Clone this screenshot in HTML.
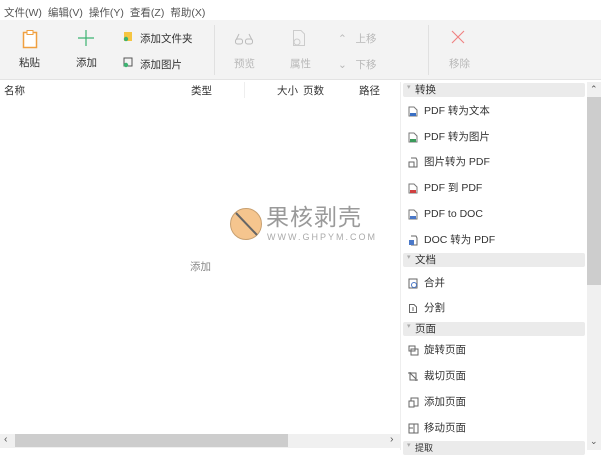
<!DOCTYPE html>
<html><head><meta charset="utf-8"><style>
*{margin:0;padding:0;box-sizing:border-box}
body{width:601px;height:450px;overflow:hidden;background:#fff;font-family:"Liberation Sans","Noto Sans CJK SC",sans-serif;font-size:10.5px;color:#333;position:relative}
.a{position:absolute;white-space:nowrap}
.menu span{margin-right:6px;color:#555}
.gray{color:#b8b8b8}
.hdr{position:absolute;left:403px;width:182px;height:14px;background:#ebebeb;border-radius:2px}
.hdr span{position:absolute;left:12px;top:0;line-height:14px}
.hdr i{position:absolute;left:4px;top:0;font-style:normal;font-size:7px;color:#aaa}
.it{position:absolute;left:408px;line-height:14px}
.it svg{position:absolute;left:0;top:2px}
.it span{position:absolute;left:16px;white-space:nowrap}
</style></head><body>
<div class="a menu" style="left:4px;top:6px;line-height:14px"><span>文件(W)</span><span>编辑(V)</span><span>操作(Y)</span><span>查看(Z)</span><span>帮助(X)</span></div>
<div class="a" style="left:0;top:20px;width:601px;height:60px;background:#f3f3f3;border-bottom:1px solid #e3e3e3"></div>
<div class="a" style="left:214px;top:25px;width:1px;height:50px;background:#e0e0e0"></div>
<div class="a" style="left:428px;top:25px;width:1px;height:50px;background:#e0e0e0"></div>
<svg class="a" style="left:22px;top:29px" width="16" height="20"><rect x="1.5" y="3.5" width="13" height="15" fill="#fff" stroke="#f0a040" stroke-width="1.5"/><rect x="5" y="1.5" width="6" height="4" fill="#fff" stroke="#f0a040"/></svg>
<div class="a" style="left:19px;top:55px">粘贴</div>
<svg class="a" style="left:77px;top:29px" width="18" height="18"><path d="M9 1V17M1 9H17" stroke="#3cb371" stroke-width="1.2"/></svg>
<div class="a" style="left:76px;top:55px">添加</div>
<svg class="a" style="left:123px;top:31px" width="10" height="11"><rect x="1" y="1" width="8" height="9" fill="#f5c542"/><circle cx="3" cy="8" r="2.2" fill="#3cb371"/></svg>
<div class="a" style="left:140px;top:31px">添加文件夹</div>
<svg class="a" style="left:123px;top:57px" width="10" height="11"><rect x="1" y="1" width="8" height="8" fill="none" stroke="#555"/><circle cx="3" cy="8" r="2.2" fill="#3cb371"/></svg>
<div class="a" style="left:140px;top:57px">添加图片</div>
<svg class="a" style="left:234px;top:32px" width="20" height="14"><path d="M2 8L5 2M18 8L15 2" stroke="#bbb"/><rect x="1.5" y="7" width="7" height="5" rx="2" fill="none" stroke="#bbb"/><rect x="11.5" y="7" width="7" height="5" rx="2" fill="none" stroke="#bbb"/></svg>
<div class="a gray" style="left:234px;top:56px">预览</div>
<svg class="a" style="left:292px;top:29px" width="14" height="18"><path d="M1.5 1.5H9L12.5 5V16.5H1.5Z" fill="none" stroke="#ccc"/><circle cx="5" cy="13" r="3" fill="#f3f3f3" stroke="#ccc"/></svg>
<div class="a gray" style="left:290px;top:56px">属性</div>
<div class="a gray" style="left:338px;top:31px">⌃&nbsp;&nbsp;&nbsp;上移</div>
<div class="a gray" style="left:338px;top:57px">⌄&nbsp;&nbsp;&nbsp;下移</div>
<svg class="a" style="left:451px;top:30px" width="14" height="14"><path d="M1 1L13 13M13 1L1 13" stroke="#f08080" stroke-width="1.1"/></svg>
<div class="a gray" style="left:449px;top:56px">移除</div>
<div class="a" style="left:4px;top:83px">名称</div>
<div class="a" style="left:191px;top:83px">类型</div>
<div class="a" style="left:244px;top:82px;width:1px;height:16px;background:#eee"></div>
<div class="a" style="left:277px;top:83px">大小</div>
<div class="a" style="left:303px;top:83px">页数</div>
<div class="a" style="left:359px;top:83px">路径</div>
<div class="a" style="left:190px;top:259px;color:#888">添加</div>
<svg class="a" style="left:229px;top:207px" width="34" height="34"><circle cx="17" cy="17" r="15.5" fill="#f5c58e" stroke="#c8a070"/><path d="M7 6L28 28" stroke="#666" stroke-width="2"/></svg>
<div class="a" style="left:266px;top:204px;font-size:23px;color:#9a9a9a;letter-spacing:1px;line-height:26px">果核剥壳</div>
<div class="a" style="left:267px;top:232px;font-size:9px;color:#aaa;letter-spacing:2px">WWW.GHPYM.COM</div>
<div class="a" style="left:0;top:434px;width:400px;height:14px;background:#f0f0f0"></div>
<div class="a" style="left:15px;top:434px;width:273px;height:13px;background:#cdcdcd"></div>
<div class="a" style="left:4px;top:433px;color:#555">‹</div>
<div class="a" style="left:390px;top:433px;color:#555">›</div>
<div class="a" style="left:400px;top:82px;width:1px;height:368px;background:#eee"></div>
<div class="hdr" style="top:83px"><i>▾</i><span>转换</span></div>
<div class="hdr" style="top:253px"><i>▾</i><span>文档</span></div>
<div class="hdr" style="top:322px"><i>▾</i><span>页面</span></div>
<div class="hdr" style="top:441px"><i>▾</i><span style="font-size:9px">提取</span></div>
<div class="it" style="top:104px"><svg width="10" height="11"><path d="M1 1H6L9 4V10H1Z" fill="none" stroke="#777"/><rect x="2" y="7" width="6" height="3" fill="#3a6fc4"/></svg><span>PDF 转为文本</span></div>
<div class="it" style="top:130px"><svg width="10" height="11"><path d="M1 1H6L9 4V10H1Z" fill="none" stroke="#777"/><rect x="2" y="7" width="6" height="3" fill="#3a9a5a"/></svg><span>PDF 转为图片</span></div>
<div class="it" style="top:155px"><svg width="10" height="11"><path d="M3 1H8L9 3V10H3" fill="none" stroke="#666"/><rect x="1" y="5" width="5" height="5" fill="none" stroke="#666"/></svg><span>图片转为 PDF</span></div>
<div class="it" style="top:181px"><svg width="10" height="11"><path d="M1 1H6L9 4V10H1Z" fill="none" stroke="#777"/><rect x="2" y="7" width="6" height="3" fill="#d04040"/></svg><span>PDF 到 PDF</span></div>
<div class="it" style="top:207px"><svg width="10" height="11"><path d="M1 1H6L9 4V10H1Z" fill="none" stroke="#777"/><rect x="2" y="7" width="6" height="3" fill="#4a78c8"/></svg><span>PDF to DOC</span></div>
<div class="it" style="top:233px"><svg width="10" height="11"><path d="M3 1H8L9 3V10H3" fill="none" stroke="#666"/><rect x="1" y="5" width="5" height="5" fill="#4a78c8"/></svg><span>DOC 转为 PDF</span></div>
<div class="it" style="top:276px"><svg width="10" height="11"><rect x="1" y="1" width="8" height="9" fill="none" stroke="#666"/><circle cx="6" cy="7" r="2.5" fill="none" stroke="#4a78c8"/></svg><span>合并</span></div>
<div class="it" style="top:301px"><svg width="10" height="11"><path d="M1.5 1.5H6L8.5 4V9.5H1.5Z" fill="none" stroke="#666"/><path d="M5 4V8" stroke="#666"/></svg><span>分割</span></div>
<div class="it" style="top:343px"><svg width="11" height="11"><rect x="1" y="1" width="6" height="5" fill="none" stroke="#666"/><rect x="3" y="4" width="7" height="6" fill="none" stroke="#666"/></svg><span>旋转页面</span></div>
<div class="it" style="top:369px"><svg width="11" height="11"><path d="M2 1V9H10M0 2H8V10M2 2L8 8" fill="none" stroke="#666"/></svg><span>裁切页面</span></div>
<div class="it" style="top:395px"><svg width="11" height="11"><rect x="3" y="1" width="7" height="8" fill="none" stroke="#666"/><rect x="1" y="4" width="5" height="6" fill="#fff" stroke="#666"/></svg><span>添加页面</span></div>
<div class="it" style="top:421px"><svg width="11" height="11"><rect x="1" y="1" width="9" height="9" fill="none" stroke="#666"/><path d="M6 1V10M1 5H5" stroke="#666"/></svg><span>移动页面</span></div>
<div class="a" style="left:587px;top:82px;width:14px;height:368px;background:#f0f0f0"></div>
<div class="a" style="left:587px;top:97px;width:14px;height:188px;background:#cdcdcd"></div>
<div class="a" style="left:590px;top:84px;font-size:9px;color:#555">⌃</div>
<div class="a" style="left:590px;top:436px;font-size:9px;color:#555">⌄</div>
</body></html>
